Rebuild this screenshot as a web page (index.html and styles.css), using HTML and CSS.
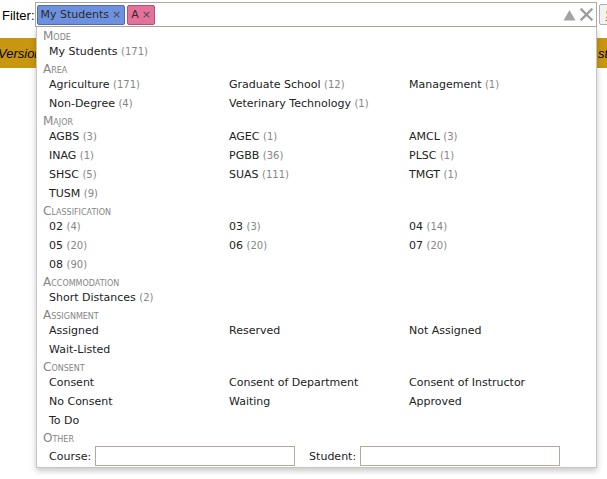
FILE: index.html
```html
<!DOCTYPE html>
<html>
<head>
<meta charset="utf-8">
<link rel="stylesheet" href="styles.css">
</head>
<body>
<div class="page">
  <div class="topbar">
    <span class="filter-label">Filter:</span>
    <div class="filter-box">
      <span class="chip chip-blue">My Students <span class="x">×</span></span>
      <span class="chip chip-pink">A <span class="x">×</span></span>
      <span class="spacer"></span>
      <svg class="ico-tri" width="13" height="12" viewBox="0 0 13 12"><path d="M6.5 1 L12.5 11.5 L0.5 11.5 Z" fill="#a3a3a3"/></svg>
      <svg class="ico-x" width="13" height="13" viewBox="0 0 13 13"><path d="M1.5 1.5 L11.5 11.5 M11.5 1.5 L1.5 11.5" stroke="#9c9c9c" stroke-width="2.3" stroke-linecap="square"/></svg>
    </div>
    <button class="search"><u>S</u>earch</button>
  </div>

  <div class="version-bar">
    <span class="vb-left">Version 4.1</span>
    <span class="vb-right">status</span>
  </div>

  <div class="dropdown">
    <div class="sec-h">Mode</div>
    <div class="items">
      <div class="it">My Students <span class="cnt">(171)</span></div>
    </div>

    <div class="sec-h">Area</div>
    <div class="items">
      <div class="it">Agriculture <span class="cnt">(171)</span></div>
      <div class="it">Graduate School <span class="cnt">(12)</span></div>
      <div class="it">Management <span class="cnt">(1)</span></div>
      <div class="it">Non-Degree <span class="cnt">(4)</span></div>
      <div class="it">Veterinary Technology <span class="cnt">(1)</span></div>
    </div>

    <div class="sec-h">Major</div>
    <div class="items">
      <div class="it">AGBS <span class="cnt">(3)</span></div>
      <div class="it">AGEC <span class="cnt">(1)</span></div>
      <div class="it">AMCL <span class="cnt">(3)</span></div>
      <div class="it">INAG <span class="cnt">(1)</span></div>
      <div class="it">PGBB <span class="cnt">(36)</span></div>
      <div class="it">PLSC <span class="cnt">(1)</span></div>
      <div class="it">SHSC <span class="cnt">(5)</span></div>
      <div class="it">SUAS <span class="cnt">(111)</span></div>
      <div class="it">TMGT <span class="cnt">(1)</span></div>
      <div class="it">TUSM <span class="cnt">(9)</span></div>
    </div>

    <div class="sec-h">Classification</div>
    <div class="items">
      <div class="it">02 <span class="cnt">(4)</span></div>
      <div class="it">03 <span class="cnt">(3)</span></div>
      <div class="it">04 <span class="cnt">(14)</span></div>
      <div class="it">05 <span class="cnt">(20)</span></div>
      <div class="it">06 <span class="cnt">(20)</span></div>
      <div class="it">07 <span class="cnt">(20)</span></div>
      <div class="it">08 <span class="cnt">(90)</span></div>
    </div>

    <div class="sec-h">Accommodation</div>
    <div class="items">
      <div class="it">Short Distances <span class="cnt">(2)</span></div>
    </div>

    <div class="sec-h">Assignment</div>
    <div class="items">
      <div class="it">Assigned</div>
      <div class="it">Reserved</div>
      <div class="it">Not Assigned</div>
      <div class="it">Wait-Listed</div>
    </div>

    <div class="sec-h">Consent</div>
    <div class="items">
      <div class="it">Consent</div>
      <div class="it">Consent of Department</div>
      <div class="it">Consent of Instructor</div>
      <div class="it">No Consent</div>
      <div class="it">Waiting</div>
      <div class="it">Approved</div>
      <div class="it">To Do</div>
    </div>

    <div class="sec-h">Other</div>
    <div class="other">
      <label class="fld"><span class="fld-l">Course:</span><input class="fld-i" type="text"></label>
      <label class="fld"><span class="fld-l">Student:</span><input class="fld-i" type="text"></label>
    </div>
  </div>
</div>
</body>
</html>
```

FILE: styles.css
```css
html, body {
  margin: 0;
  padding: 0;
  background: #ffffff;
  overflow: hidden;
}

.page {
  position: relative;
  width: 607px;
  height: 479px;
  font-family: "Liberation Sans", Arial, sans-serif;
  font-size: 13px;
  color: #000;
}

.topbar {
  display: flex;
  align-items: center;
  padding: 2px 0 0 2px;
  white-space: nowrap;
}

.filter-label {
  font-size: 13px;
  margin-top: 2px;
  width: 35px;
}

.filter-box {
  flex: 0 0 auto;
  box-sizing: border-box;
  width: 562px;
  height: 25px;
  border: 1px solid #b2a899;
  background: #fff;
  display: flex;
  align-items: center;
  gap: 2px;
  padding: 0 3px 0 1px;
}

.chip {
  box-sizing: border-box;
  height: 20px;
  display: inline-flex;
  align-items: center;
  padding: 0 3px 0 3px;
  font-family: "DejaVu Sans", Verdana, sans-serif;
  font-size: 11px;
  color: #2b2b2b;
  border-radius: 2px;
  gap: 3px;
}

.chip .x {
  font-size: 11px;
  color: #4a4a4a;
}

.chip-blue {
  background: #6e91df;
  border: 1px solid #4b6cc2;
}

.chip-pink {
  background: #e4719a;
  border: 1px solid #be4a76;
}

.spacer {
  flex: 1 1 auto;
}

.ico-tri {
  display: block;
  margin-right: 2px;
}

.ico-x {
  display: block;
}

.search {
  flex: 0 0 auto;
  margin-left: 2px;
  height: 21px;
  padding: 0 6px;
  border: 1px solid #b0b0b0;
  background: #f2f2f2;
  font-family: "Liberation Sans", Arial, sans-serif;
  font-size: 13px;
  color: #9a7407;
  border-radius: 2px;
}

.version-bar {
  margin-top: 11px;
  height: 30px;
  background: #c9970f;
  display: grid;
  grid-template-columns: 598px 1fr;
  align-items: center;
  font-style: italic;
  font-size: 13px;
  white-space: nowrap;
  overflow: hidden;
}

.vb-left {
  margin-left: -2px;
}

.dropdown {
  position: absolute;
  left: 36px;
  top: 27px;
  box-sizing: border-box;
  width: 561px;
  height: 441px;
  background: #fff;
  border: 1px solid #c4c4c4;
  border-top: none;
  box-shadow: 0 3px 6px rgba(0, 0, 0, 0.22);
  font-family: "DejaVu Sans", Verdana, sans-serif;
  font-size: 11px;
  color: #222;
  padding: 1px 0 0 6px;
}

.sec-h {
  margin-top: 3px;
  line-height: 11px;
  height: 11px;
  font-variant: small-caps;
  font-size: 12px;
  color: #858585;
}

.items {
  display: grid;
  grid-template-columns: repeat(3, 180px);
  padding-left: 6px;
}

.it {
  line-height: 19px;
  height: 19px;
  white-space: nowrap;
}

.cnt {
  font-size: 10px;
  color: #868686;
}

.other {
  display: flex;
  align-items: center;
  height: 24px;
  padding-left: 6px;
  gap: 14px;
}

.fld {
  display: flex;
  align-items: center;
}

.fld-l {
  margin-right: 4px;
}

.fld-i {
  box-sizing: border-box;
  width: 200px;
  height: 20px;
  border: 1px solid #b5a998;
  margin: 0;
  padding: 0 2px;
  background: #fff;
  font: inherit;
}
```
